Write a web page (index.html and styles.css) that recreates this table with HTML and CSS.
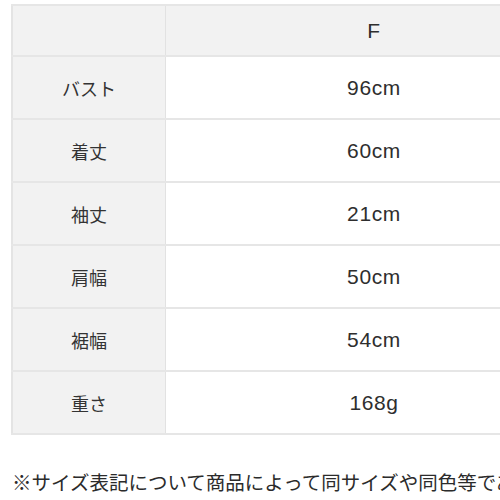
FILE: index.html
```html
<!DOCTYPE html>
<html lang="ja">
<head>
<meta charset="utf-8">
<link rel="stylesheet" href="styles.css">
</head>
<body>
<div class="page">
  <table class="size-table">
    <tr class="head">
      <th class="label"></th>
      <th class="value">F</th>
    </tr>
    <tr><th class="label">バスト</th><td class="value">96cm</td></tr>
    <tr><th class="label">着丈</th><td class="value">60cm</td></tr>
    <tr><th class="label">袖丈</th><td class="value">21cm</td></tr>
    <tr><th class="label">肩幅</th><td class="value">50cm</td></tr>
    <tr><th class="label">裾幅</th><td class="value">54cm</td></tr>
    <tr><th class="label">重さ</th><td class="value">168g</td></tr>
  </table>
  <p class="note">※サイズ表記について商品によって同サイズや同色等であっても若干の誤差が生じる場合がございます。</p>
</div>
</body>
</html>
```

FILE: styles.css
```css
html, body {
  margin: 0;
  padding: 0;
  background: #fff;
  overflow: hidden;
}
.page {
  width: 500px;
  height: 500px;
  overflow: hidden;
  padding: 4px 0 0 11px;
  box-sizing: border-box;
  font-family: "Noto Sans CJK JP", "Noto Sans", sans-serif;
  color: #333;
}
.size-table {
  border-collapse: collapse;
  width: 489px;
  table-layout: fixed;
  border-top: 2px solid #e6e6e6;
  border-left: 2px solid #e4e4e4;
}
.size-table th,
.size-table td {
  font-weight: normal;
  font-size: 18px;
  height: 61px;
  padding: 0;
  text-align: center;
  vertical-align: middle;
  border-bottom: 2px solid #e6e6e6;
}
.size-table .head th {
  height: 49px;
  background: #f2f2f2;
}
.size-table .label {
  width: 152px;
  background: #f2f2f2;
  border-right: 1px solid #e2e2e2;
}
.size-table .value {
  padding-left: 82px;
  font-family: "Liberation Sans", "Noto Sans", sans-serif;
  font-size: 21px;
  letter-spacing: 0.6px;
  color: #2e2e2e;
}
.note {
  margin: 33px 0 0 1px;
  font-size: 19.5px;
  white-space: nowrap;
  line-height: 1.4;
  color: #2b2b2b;
}
```
